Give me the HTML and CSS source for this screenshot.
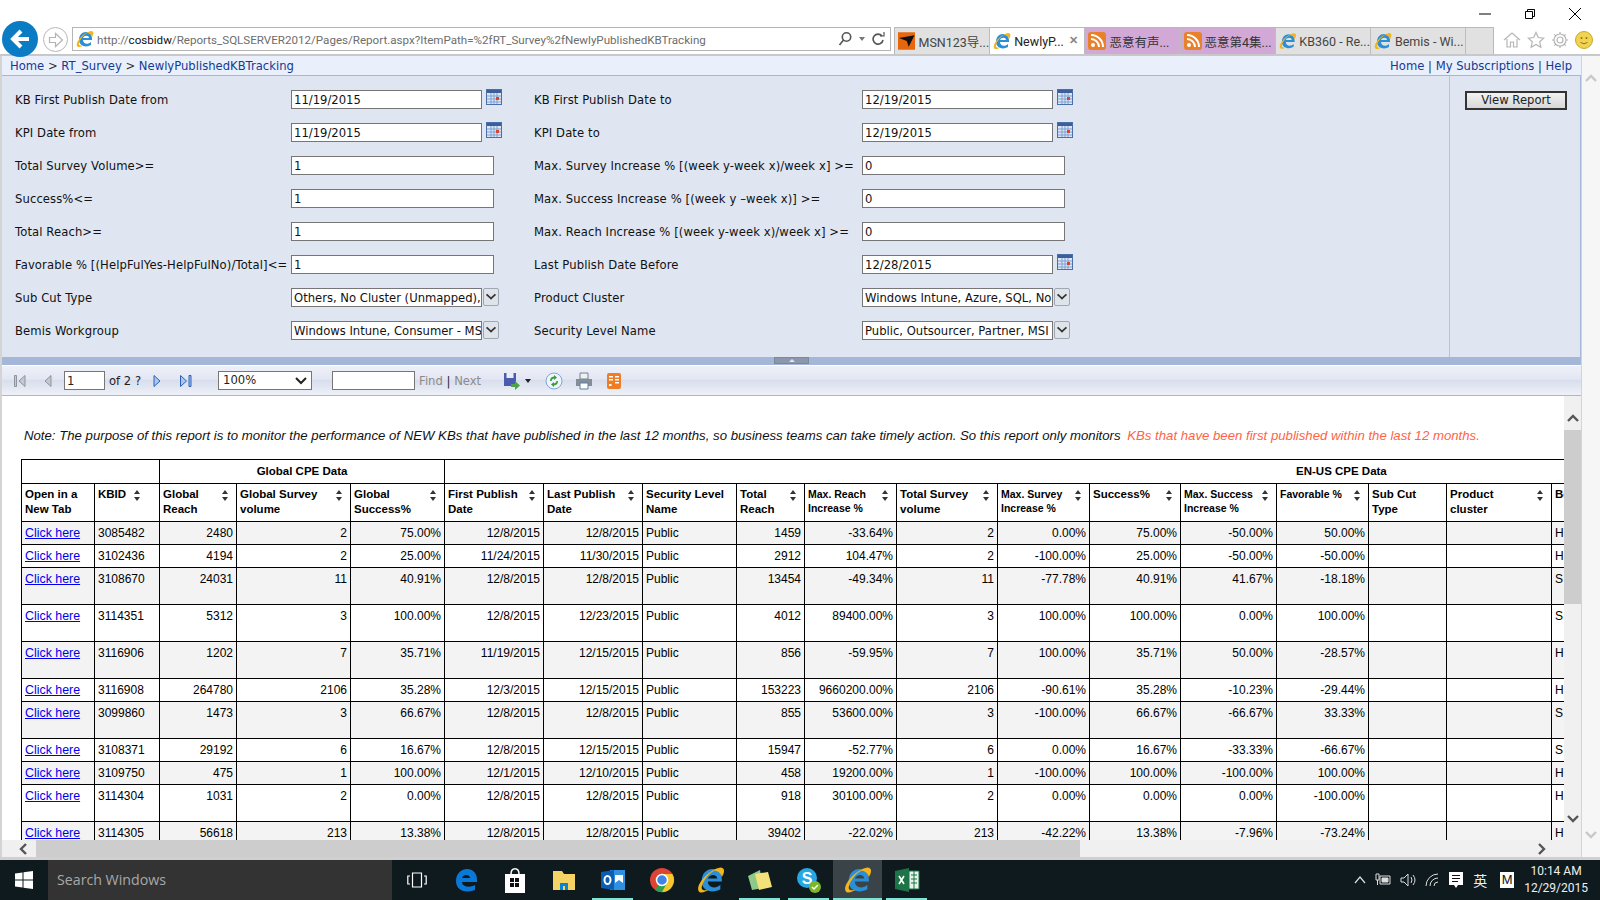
FILE: index.html
```html
<!DOCTYPE html>
<html lang="en">
<head>
    <meta charset="UTF-8">
    <title>NewlyPublishedKBTracking</title>
    <link rel="stylesheet" href="styles.css">
</head>
<body>
    <div class="window">
        <div class="title-bar">
            <span class="win-btn"><svg width="14" height="14" viewBox="0 0 14 14"><path d="M1 7h12" stroke="#000" stroke-width="1"/></svg></span>
            <span class="win-btn"><svg width="14" height="14" viewBox="0 0 14 14" fill="none" stroke="#000"><path d="M2.5 4.5h7v7h-7zM4.5 4.5v-2h7v7h-2"/></svg></span>
            <span class="win-btn"><svg width="14" height="14" viewBox="0 0 14 14"><path d="M1 1l12 12M13 1L1 13" stroke="#000"/></svg></span>
        </div>

        <div class="nav-bar">
            <span class="back-btn"><svg width="24" height="24" viewBox="0 0 24 24" fill="none" stroke="#fff" stroke-width="4"><path d="M21 12H6M13 4l-8 8 8 8"/></svg></span>
            <span class="forward-btn"><svg width="16" height="16" viewBox="0 0 16 16" fill="none" stroke="#b4b4b4" stroke-width="1.2"><path d="M1.5 5.5h6v-4l7 6.5-7 6.5v-4h-6z"/></svg></span>
            <div class="address-bar">
                <svg class="ie-icon" width="18" height="18" viewBox="0 0 18 18"><use href="#ie"/></svg>
                <span class="url">http://<b>cosbidw</b>/Reports_SQLSERVER2012/Pages/Report.aspx?ItemPath=%2fRT_Survey%2fNewlyPublishedKBTracking</span>
                <svg width="16" height="16" viewBox="0 0 16 16" fill="none" stroke="#555" stroke-width="1.6"><circle cx="9.5" cy="6" r="4.2"/><path d="M6.5 9l-4 5"/></svg>
                <span class="caret"></span>
                <svg width="14" height="16" viewBox="0 0 14 16" fill="none" stroke="#555" stroke-width="1.6"><path d="M11 5a5 5 0 1 0 1 4"/><path d="M9 5h4V1" stroke-width="1.2"/></svg>
            </div>
            <div class="tabs">
                <div class="tab"><svg width="18" height="18" viewBox="0 0 18 18"><rect width="18" height="18" fill="#e8660c"/><path d="M1 6l16-3-6 12-2-6z" fill="#111"/></svg><span>MSN123导...</span></div>
                <div class="tab active"><svg width="18" height="18" viewBox="0 0 18 18"><use href="#ie"/></svg><span>NewlyP...</span><i class="tab-x">✕</i></div>
                <div class="tab pink"><svg width="18" height="18" viewBox="0 0 18 18"><use href="#rss"/></svg><span>恶意有声...</span></div>
                <div class="tab pink"><svg width="18" height="18" viewBox="0 0 18 18"><use href="#rss"/></svg><span>恶意第4集...</span></div>
                <div class="tab"><svg width="18" height="18" viewBox="0 0 18 18"><use href="#ie"/></svg><span>KB360 - Re...</span></div>
                <div class="tab"><svg width="18" height="18" viewBox="0 0 18 18"><use href="#ie"/></svg><span>Bemis - Wi...</span></div>
                <div class="tab new-tab"></div>
            </div>
            <div class="tools">
                <svg width="18" height="18" viewBox="0 0 18 18" fill="none" stroke="#b5b5b5" stroke-width="1.2"><path d="M1 9l8-7 8 7M4 8v8h3.5v-5h3v5H14V8"/></svg>
                <svg width="18" height="18" viewBox="0 0 18 18" fill="none" stroke="#b5b5b5" stroke-width="1.2"><path d="M9 1.5l2.3 5 5.5.6-4.1 3.7 1.2 5.5L9 13.5l-4.9 2.8 1.2-5.5L1.2 7.1l5.5-.6z"/></svg>
                <svg width="18" height="18" viewBox="0 0 18 18" fill="none" stroke="#b5b5b5" stroke-width="1.2"><circle cx="9" cy="9" r="3"/><circle cx="9" cy="9" r="6"/><path d="M9 1v2M9 15v2M1 9h2M15 9h2M3.3 3.3l1.5 1.5M13.2 13.2l1.5 1.5M14.7 3.3l-1.5 1.5M4.8 13.2l-1.5 1.5"/></svg>
                <svg width="18" height="18" viewBox="0 0 18 18"><circle cx="9" cy="9" r="8.5" fill="#f2d34f" stroke="#c9a92c"/><circle cx="6.5" cy="7" r="1" fill="#8a7420"/><circle cx="11.5" cy="7" r="1" fill="#8a7420"/><path d="M5.5 11.5q3.5 2.5 7 0" fill="none" stroke="#8a7420"/></svg>
            </div>
        </div>

        <div class="page">
            <div class="page-main">
                <div class="breadcrumb">
                    <div class="crumbs"><a>Home</a> &gt; <a>RT_Survey</a> &gt; <a>NewlyPublishedKBTracking</a></div>
                    <div class="crumbs"><a>Home</a> | <a>My Subscriptions</a> | <a>Help</a></div>
                </div>

                <div class="params">
                    <div class="param-grid">
                        <label>KB First Publish Date from</label>
                        <div class="field"><span class="input date">11/19/2015</span><svg class="cal" width="16" height="16"><use href="#cal"/></svg></div>
                        <label>KB First Publish Date to</label>
                        <div class="field"><span class="input date">12/19/2015</span><svg class="cal" width="16" height="16"><use href="#cal"/></svg></div>

                        <label>KPI Date from</label>
                        <div class="field"><span class="input date">11/19/2015</span><svg class="cal" width="16" height="16"><use href="#cal"/></svg></div>
                        <label>KPI Date to</label>
                        <div class="field"><span class="input date">12/19/2015</span><svg class="cal" width="16" height="16"><use href="#cal"/></svg></div>

                        <label>Total Survey Volume&gt;=</label>
                        <div class="field"><span class="input">1</span></div>
                        <label>Max. Survey Increase % [(week y-week x)/week x] &gt;=</label>
                        <div class="field"><span class="input">0</span></div>

                        <label>Success%&lt;=</label>
                        <div class="field"><span class="input">1</span></div>
                        <label>Max. Success Increase % [(week y –week x)] &gt;=</label>
                        <div class="field"><span class="input">0</span></div>

                        <label>Total Reach&gt;=</label>
                        <div class="field"><span class="input">1</span></div>
                        <label>Max. Reach Increase % [(week y-week x)/week x] &gt;=</label>
                        <div class="field"><span class="input">0</span></div>

                        <label>Favorable % [(HelpFulYes-HelpFulNo)/Total]&lt;=</label>
                        <div class="field"><span class="input">1</span></div>
                        <label>Last Publish Date Before</label>
                        <div class="field"><span class="input date">12/28/2015</span><svg class="cal" width="16" height="16"><use href="#cal"/></svg></div>

                        <label>Sub Cut Type</label>
                        <div class="field"><span class="input date clip">Others, No Cluster (Unmapped),</span><span class="drop"></span></div>
                        <label>Product Cluster</label>
                        <div class="field"><span class="input date clip">Windows Intune, Azure, SQL, No</span><span class="drop"></span></div>

                        <label>Bemis Workgroup</label>
                        <div class="field"><span class="input date clip">Windows Intune, Consumer - MS</span><span class="drop"></span></div>
                        <label>Security Level Name</label>
                        <div class="field"><span class="input date clip">Public, Outsourcer, Partner, MSI</span><span class="drop"></span></div>
                    </div>
                    <div class="view-col"><button class="view-btn">View Report</button></div>
                </div>

                <div class="splitter"><span class="split-handle"></span></div>

                <div class="toolbar">
                    <svg class="tb-nav" width="14" height="14" viewBox="0 0 14 14" fill="#c4c8d0" stroke="#8f949c"><path d="M1.5 1.5h2v11h-2zM12 1.5v11L6 7z"/></svg>
                    <svg class="tb-nav second" width="10" height="14" viewBox="0 0 10 14" fill="#c4c8d0" stroke="#8f949c"><path d="M8 1.5v11L2 7z"/></svg>
                    <span class="tb-input page-num">1</span>
                    <span class="of-text">of 2 ?</span>
                    <svg class="tb-nav next" width="10" height="14" viewBox="0 0 10 14" fill="#a9c6ee" stroke="#2a62b8"><path d="M2 1.5v11L8 7z"/></svg>
                    <svg class="tb-nav last" width="14" height="14" viewBox="0 0 14 14" fill="#a9c6ee" stroke="#2a62b8"><path d="M1.5 1.5v11L7.5 7zM10 1.5h2v11h-2z"/></svg>
                    <span class="tb-input zoom-select">100%<svg width="12" height="8" viewBox="0 0 12 8" fill="none" stroke="#222" stroke-width="2"><path d="M1 1l5 5 5-5"/></svg></span>
                    <span class="tb-input find-box"></span>
                    <span class="find-links"><em>Find</em> | <em>Next</em></span>
                    <svg class="tb-save" width="18" height="18" viewBox="0 0 18 18"><path d="M1 1h12v13H1z" fill="#4a5cb0"/><path d="M3.5 1h7v5h-7z" fill="#e8ecf6"/><path d="M8 12h4V9l5 4.5-5 4.5v-3H8z" fill="#4fa24a"/></svg>
                    <span class="caret dark"></span>
                    <svg class="tb-refresh" width="18" height="18" viewBox="0 0 18 18"><circle cx="9" cy="9" r="8" fill="#eef4fb" stroke="#7ea6d8"/><path d="M9 3l3 2.5-3 2.5V6.5A3 3 0 0 0 6.5 9H5a4.5 4.5 0 0 1 4-4.5zM9 15l-3-2.5L9 10v1.5A3 3 0 0 0 11.5 9H13a4.5 4.5 0 0 1-4 4.5z" fill="#3f9a3c"/></svg>
                    <svg class="tb-print" width="18" height="18" viewBox="0 0 18 18"><path d="M5 1h8v6H5z" fill="#eef0f3" stroke="#77808c"/><path d="M1 7h16v7H1z" fill="#858d99"/><path d="M5 11h8v6H5z" fill="#fff" stroke="#5f7fa8"/></svg>
                    <svg class="tb-feed" width="14" height="16" viewBox="0 0 14 16"><rect width="14" height="16" rx="2" fill="#ee7d25"/><path d="M2 3h4v1.5H2zM8 3h4v1.5H8zM8 6h4v1.5H8zM8 9h4v1.5H8zM2 6h4v1.5H2zM2 11h2.5v2H2z" fill="#fff"/></svg>
                </div>

                <div class="report">
                    <div class="report-body">
                        <p class="note">Note: The purpose of this report is to monitor the performance of NEW KBs that have published in the last 12 months, so business teams can take timely action. So this report only monitors <span class="note-red">KBs that have been first published within the last 12 months.</span></p>
                        <div class="table-clip">
                            <table id="reportTable">
                                <colgroup id="reportCols"></colgroup>
                                <thead>
                                    <tr class="group-row">
                                        <th colspan="2"></th>
                                        <th colspan="3">Global CPE Data</th>
                                        <th colspan="13" class="en-us">EN-US CPE Data</th>
                                    </tr>
                                    <tr class="head-row" id="headRow"></tr>
                                </thead>
                                <tbody id="reportRows"></tbody>
                            </table>
                        </div>
                    </div>
                    <div class="v-scroll inner">
                        <svg width="12" height="8" viewBox="0 0 12 8" fill="none" stroke="#555" stroke-width="2.4"><path d="M1 7l5-5 5 5"/></svg>
                        <span class="v-thumb"></span>
                        <svg class="sb-end" width="12" height="8" viewBox="0 0 12 8" fill="none" stroke="#555" stroke-width="2.4"><path d="M1 1l5 5 5-5"/></svg>
                    </div>
                </div>
                <div class="h-scroll">
                    <span class="h-arrow"><svg width="10" height="12" viewBox="0 0 10 12" fill="none" stroke="#555" stroke-width="2.4"><path d="M8 1L3 6l5 5"/></svg></span>
                    <span class="h-thumb"></span>
                    <span class="h-arrow right"><svg width="10" height="12" viewBox="0 0 10 12" fill="none" stroke="#555" stroke-width="2.4"><path d="M2 1l5 5-5 5"/></svg></span>
                </div>
            </div>
            <div class="v-scroll outer">
                <svg width="12" height="8" viewBox="0 0 12 8" fill="none" stroke="#c8c8c8" stroke-width="2.4"><path d="M1 7l5-5 5 5"/></svg>
                <svg class="sb-end" width="12" height="8" viewBox="0 0 12 8" fill="none" stroke="#c8c8c8" stroke-width="2.4"><path d="M1 1l5 5 5-5"/></svg>
            </div>
        </div>

        <div class="taskbar">
            <span class="start"><svg width="18" height="18" viewBox="0 0 18 18" fill="#fff"><path d="M0 2.5l7.5-1v7H0zM8.5 1.3L18 0v8.5H8.5zM0 9.5h7.5v7l-7.5-1zM8.5 9.5H18V18l-9.5-1.3z"/></svg></span>
            <div class="search">Search Windows</div>
            <span class="task-ico"><svg width="20" height="18" viewBox="0 0 20 18" fill="none" stroke="#fff" stroke-width="1.2"><path d="M5.5 2h9v14h-9zM3 5H.8v8H3M17 5h2.2v8H17"/></svg></span>
            <span class="task-ico"><svg width="24" height="24" viewBox="0 0 24 24"><path d="M2 13C2 5 8 1 13 1c6 0 10 4 10 11v2H8c0 5 8 6 13 3v5c-7 3-19 2-19-9zm6-3h8c0-4-7-4-8 0z" fill="#0a78d7"/></svg></span>
            <span class="task-ico"><svg width="24" height="26" viewBox="0 0 24 26"><path d="M2 7h20v19H2z" fill="#fff"/><path d="M8 7c0-7 8-7 8 0" fill="none" stroke="#fff" stroke-width="1.5"/><path d="M7 11h4v4H7zM12 11h4v4h-4zM7 16h4v4H7zM12 16h4v4h-4z" fill="#111"/></svg></span>
            <span class="task-ico"><svg width="24" height="24" viewBox="0 0 24 24"><path d="M1 3h9l2 3h11v16H1z" fill="#f6d365"/><path d="M8 15h8v7H8z" fill="#0a82d6"/><path d="M11 18h2v4h-2z" fill="#f6d365"/></svg></span>
            <span class="task-ico running"><svg width="26" height="24" viewBox="0 0 26 24"><path d="M10 2h15v20H10z" fill="#2f8fe0"/><path d="M1 4l13-2v20L1 20z" fill="#0b5db4"/><path d="M15 7h8v8l-4-3-4 3z" fill="#fff"/><ellipse cx="7.5" cy="12" rx="3" ry="4" fill="none" stroke="#fff" stroke-width="2"/></svg></span>
            <span class="task-ico"><svg width="26" height="26" viewBox="0 0 26 26"><circle cx="13" cy="13" r="12" fill="#de4433"/><path d="M13 13L23.4 19A12 12 0 0 1 6 23z" fill="#2e9e4f"/><path d="M13 7h10.4A12 12 0 0 1 13 25l5-9z" fill="#f7c62d"/><circle cx="13" cy="13" r="5.5" fill="#3f83e6" stroke="#fff" stroke-width="1.5"/></svg></span>
            <span class="task-ico"><svg width="28" height="28" viewBox="0 0 18 18"><use href="#ie"/></svg></span>
            <span class="task-ico running"><svg width="26" height="24" viewBox="0 0 26 24"><path d="M1 8l12-6 3 18-11 2z" fill="#8fc98a"/><path d="M8 6l13-2 4 15-13 3z" fill="#f2e27a"/></svg></span>
            <span class="task-ico running"><svg width="26" height="28" viewBox="0 0 26 28"><circle cx="11" cy="12" r="10" fill="#27a8e4"/><text x="11" y="18" text-anchor="middle" class="skype-s">S</text><circle cx="19" cy="21" r="6" fill="#7ab829"/><path d="M16 21l2 2 4-4" fill="none" stroke="#fff" stroke-width="1.5"/></svg></span>
            <span class="task-ico current running"><svg width="28" height="28" viewBox="0 0 18 18"><use href="#ie"/></svg></span>
            <span class="task-ico running"><svg width="26" height="24" viewBox="0 0 26 24"><path d="M1 3l14-3v24L1 21z" fill="#1d7446"/><path d="M15 3h10v18H15z" fill="#e6f2ea" stroke="#1d7446"/><path d="M17 7h6M17 11h6M17 15h6M20 3v18" stroke="#1d7446"/><path d="M5 8l5 8M10 8l-5 8" stroke="#fff" stroke-width="1.6"/></svg></span>
            <div class="tray">
                <svg width="12" height="8" viewBox="0 0 12 8" fill="none" stroke="#ddd" stroke-width="1.2"><path d="M1 7l5-6 5 6"/></svg>
                <svg width="16" height="14" viewBox="0 0 16 14" fill="none" stroke="#ddd"><path d="M5 3h10v8H5z"/><path d="M1 1h3v6H1zM2.5 7v5"/><path d="M7 5h6v4H7z" fill="#ddd"/></svg>
                <svg width="16" height="14" viewBox="0 0 16 14" fill="none" stroke="#ddd"><path d="M1 5h3l4-4v12l-4-4H1zM11 4q2 3 0 6M13 2q4 5 0 10"/></svg>
                <svg width="16" height="14" viewBox="0 0 16 14" fill="none" stroke="#ddd"><path d="M1 13A12 12 0 0 1 13 1M5 13a8 8 0 0 1 8-8M9 13a4 4 0 0 1 4-4"/></svg>
                <svg class="tray-msg" width="16" height="18" viewBox="0 0 16 18"><path d="M1 1h14v13H10l-2 3-2-3H1z" fill="#fff"/><path d="M4 4.5h8M4 7.5h8M4 10.5h6" stroke="#111"/></svg>
                <span class="lang">英</span>
                <span class="m-key">M</span>
                <div class="clock"><span>10:14 AM</span><span>12/29/2015</span></div>
            </div>
        </div>
    </div>

    <svg class="defs" width="0" height="0">
        <defs>
            <g id="ie">
                <path d="M3 10c0-5 3-8 7-8 4 0 6 3 6 7v1H7c0 4 5 5 8 2v3c-5 3-12 1-12-5zm4-2h6c0-3-5-3-6 0z" fill="#2a8fd8"/>
                <path d="M1 16C-1 12 8 2 15 1c3 0 3 3 1 6-1-3-3-4-5-4C7 5 3 11 3 14c0 2 3 2 5 1-3 2-6 3-7 1z" fill="#f3b51d"/>
            </g>
            <g id="rss">
                <rect width="18" height="18" rx="3" fill="#e8822a"/>
                <circle cx="5" cy="13" r="2" fill="#fff"/>
                <path d="M3 7a8 8 0 0 1 8 8M3 3a12 12 0 0 1 12 12" fill="none" stroke="#fff" stroke-width="2"/>
            </g>
            <g id="cal">
                <rect x="0.5" y="0.5" width="15" height="15" fill="#dce8f7" stroke="#4b6fa8"/>
                <rect x="1" y="1" width="14" height="3" fill="#3c5f9c"/>
                <path d="M1 7h14M1 10h14M1 13h14M5 4v11M8 4v11M11 4v11" stroke="#7f9fd0"/>
                <rect x="10" y="8" width="3" height="3" fill="#d9442f"/>
            </g>
        </defs>
    </svg>

    <script src="report.js"></script>
</body>
</html>
```

FILE: styles.css
```css
* {
    box-sizing: border-box;
}

html, body {
    margin: 0;
    height: 100%;
    overflow: hidden;
}

body {
    font-family: "Liberation Sans", Arial, sans-serif;
    background-color: #fff;
}

.defs {
    position: absolute;
}

.window {
    display: flex;
    flex-direction: column;
    height: 900px;
}

.title-bar {
    height: 27px;
    display: flex;
    justify-content: flex-end;
    align-items: flex-start;
    gap: 31px;
    padding: 7px 18px 0 0;
}

.win-btn {
    width: 14px;
    height: 14px;
    display: flex;
}

.nav-bar {
    height: 29px;
    display: flex;
    align-items: flex-start;
    position: relative;
    padding-left: 72px;
    border-bottom: 2px solid #c8c8c8;
}

.back-btn {
    position: absolute;
    left: 2px;
    top: -6px;
    width: 36px;
    height: 36px;
    border-radius: 50%;
    background-color: #0a7cc4;
    display: flex;
    align-items: center;
    justify-content: center;
}

.forward-btn {
    position: absolute;
    left: 43px;
    top: 0;
    width: 25px;
    height: 25px;
    border-radius: 50%;
    border: 1px solid #b8b8b8;
    display: flex;
    align-items: center;
    justify-content: center;
}

.address-bar {
    width: 819px;
    height: 24px;
    border: 1px solid #b5b5b5;
    display: flex;
    align-items: center;
    gap: 6px;
    padding: 0 5px 0 3px;
}

.ie-icon {
    margin-right: -3px;
}

.url {
    flex: 1;
    padding-top: 1px;
    font-family: Roboto, sans-serif;
    font-size: 11.6px;
    color: #6d6d6d;
    white-space: nowrap;
    overflow: hidden;
}

.url b {
    font-weight: 400;
    color: #111;
}

.caret {
    width: 0;
    height: 0;
    border-left: 3.5px solid transparent;
    border-right: 3.5px solid transparent;
    border-top: 4px solid #777;
}

.caret.dark {
    border-top-color: #222;
    margin-left: 4px;
}

.tabs {
    display: flex;
    margin-left: 3px;
    height: 27px;
    border: 1px solid #b9b9b9;
    border-bottom: none;
}

.tab {
    width: 95.2px;
    display: flex;
    align-items: center;
    gap: 3px;
    padding-left: 3px;
    background-color: #e1e1e1;
    border-right: 1px solid #bdbdbd;
    font-family: Roboto, "Noto Sans CJK SC", sans-serif;
    font-size: 12.5px;
    color: #444;
    white-space: nowrap;
    position: relative;
}

.tab.active {
    background-color: #fff;
    color: #222;
}

.tab.pink {
    background-color: #d2a8d6;
    color: #333;
}

.tab.new-tab {
    width: 27px;
    padding: 0;
    border-right: none;
}

.tab-x {
    position: absolute;
    right: 6px;
    top: 6px;
    font-style: normal;
    font-size: 11px;
    font-weight: 700;
    color: #888;
}

.tools {
    display: flex;
    gap: 6px;
    padding: 4px 0 0 9px;
}

.page {
    flex: 1;
    display: flex;
    min-height: 0;
    padding-left: 2px;
    border-bottom: 3px solid #d0d0d0;
    background-color: #d4d4d4;
}

.page-main {
    flex: 1;
    min-width: 0;
    display: flex;
    flex-direction: column;
    background-color: #fff;
}

.breadcrumb {
    height: 20px;
    background-color: #e9f0fb;
    display: flex;
    justify-content: space-between;
    align-items: center;
    padding: 0 9px 0 8px;
    border-bottom: 1px solid #a5b7d8;
}

.crumbs {
    font-family: "DejaVu Sans", Verdana, sans-serif;
    font-size: 11.6px;
    color: #333;
}

.crumbs a {
    color: #153a94;
}

.params {
    height: 281px;
    display: flex;
    background-color: #dfe6f2;
    border-right: 1px solid #a5b7d8;
}

.param-grid {
    width: 1448px;
    border-right: 1px solid #b6c3db;
    display: grid;
    grid-template-columns: 276px 243px 328px 1fr;
    grid-auto-rows: 33px;
    padding: 14px 0 0 13px;
}

.param-grid label {
    font-family: "DejaVu Sans", Verdana, sans-serif;
    font-size: 11.6px;
    letter-spacing: 0.1px;
    color: #111;
    white-space: nowrap;
    line-height: 21px;
    height: 21px;
}

.field {
    display: flex;
    align-items: flex-start;
}

.input {
    width: 203px;
    height: 19px;
    background-color: #fff;
    border: 1px solid #767676;
    font-family: "DejaVu Sans", Verdana, sans-serif;
    font-size: 11.6px;
    line-height: 19px;
    padding-left: 2px;
    white-space: nowrap;
    overflow: hidden;
    color: #111;
}

.input.date {
    width: 191px;
}

.cal {
    margin: -1px 0 0 4px;
}

.drop {
    width: 16px;
    height: 18px;
    margin-left: 1px;
    background-color: #dfe3ea;
    border: 1px solid #a0a6b2;
    border-radius: 2px;
    position: relative;
}

.drop::after {
    content: "";
    position: absolute;
    left: 3px;
    top: 2px;
    width: 6px;
    height: 6px;
    border-right: 2px solid #333;
    border-bottom: 2px solid #333;
    transform: scale(0.9, 0.8) rotate(45deg);
}

.view-col {
    flex: 1;
    padding: 14px 0 0 15px;
}

.view-btn {
    width: 102px;
    height: 19px;
    padding: 0;
    background: linear-gradient(#f2f2f2, #d8d8d8);
    border: 2px solid #333;
    font-family: "DejaVu Sans", Verdana, sans-serif;
    font-size: 11.6px;
    color: #222;
}

.splitter {
    height: 8px;
    background-color: #a5b7d8;
    display: flex;
    justify-content: center;
}

.split-handle {
    width: 35px;
    height: 7px;
    background-color: #8c97ad;
    border: 1px solid #7d889e;
    display: flex;
    justify-content: center;
    align-items: center;
}

.split-handle::after {
    content: "";
    border-left: 3px solid transparent;
    border-right: 3px solid transparent;
    border-bottom: 3px solid #dfe6f2;
}

.toolbar {
    height: 31px;
    display: flex;
    align-items: center;
    padding-left: 11px;
    background: linear-gradient(#eef0f8 0%, #e3e7f3 45%, #d9deed 50%, #eef1f8 100%);
    border-top: 1px solid #fff;
    border-bottom: 1px solid #a5b7d8;
    font-family: "DejaVu Sans", Verdana, sans-serif;
    font-size: 11.6px;
    color: #222;
}

.tb-nav.second {
    margin-left: 16px;
}

.tb-nav.next {
    margin-left: 11px;
}

.tb-nav.last {
    margin-left: 17px;
}

.tb-input {
    height: 19px;
    background-color: #fff;
    border: 1px solid #767676;
    line-height: 19px;
    padding-left: 2px;
}

.page-num {
    width: 41px;
    margin-left: 11px;
}

.of-text {
    margin-left: 4px;
}

.zoom-select {
    width: 94px;
    margin-left: 25px;
    padding-left: 4px;
    display: flex;
    align-items: center;
    justify-content: space-between;
    padding-right: 4px;
}

.find-box {
    width: 83px;
    margin-left: 20px;
}

.find-links {
    margin-left: 4px;
}

.find-links em {
    font-style: normal;
    color: #8b8b8b;
}

.tb-save {
    margin-left: 22px;
}

.tb-refresh {
    margin-left: 14px;
}

.tb-print {
    margin-left: 12px;
}

.tb-feed {
    margin-left: 14px;
}

.report {
    flex: 1;
    min-height: 0;
    display: flex;
}

.report-body {
    flex: 1;
    min-width: 0;
    display: flex;
    flex-direction: column;
}

.note {
    margin: 0;
    padding: 32px 0 0 22px;
    height: 63px;
    font-size: 13.2px;
    font-style: italic;
    color: #111;
    white-space: nowrap;
}

.note-red {
    color: #ff6347;
    margin-left: 3px;
}

.table-clip {
    flex: 1;
    min-height: 0;
    overflow: hidden;
    padding-left: 19px;
}

table {
    table-layout: fixed;
    border-collapse: collapse;
    width: 1589px;
    font-size: 12px;
    color: #000;
}

th, td {
    border: 1px solid #000;
    padding: 4px 3px 2px;
    overflow: hidden;
    vertical-align: top;
    text-align: left;
    line-height: 15px;
}

td {
    height: 23px;
    white-space: nowrap;
}

td.num {
    text-align: right;
}

tr.tall td {
    height: 37px;
}

tbody tr:nth-child(odd) td {
    background-color: #f3f3f3;
}

td a {
    color: #0000ee;
    font-size: 12.4px;
    text-decoration: underline;
}

.group-row th {
    height: 24px;
    padding: 2px 3px;
    text-align: center;
    font-size: 11.5px;
    vertical-align: middle;
}

.group-row .en-us {
    text-align: left;
    padding-left: 851px;
}

.head-row th {
    height: 38px;
    position: relative;
    padding: 3px 3px 0;
    font-size: 11.5px;
    white-space: nowrap;
}

.head-row th.small {
    font-size: 10.5px;
    line-height: 14px;
}

.sort {
    position: absolute;
    right: 7px;
    top: 6px;
    width: 7px;
    height: 11px;
}

.sort.near {
    right: 18px;
}

.sort::before, .sort::after {
    content: "";
    position: absolute;
    left: 0;
    border-left: 3.5px solid transparent;
    border-right: 3.5px solid transparent;
}

.sort::before {
    top: 0;
    border-bottom: 4px solid #333;
}

.sort::after {
    bottom: 0;
    border-top: 4px solid #333;
}

.v-scroll {
    width: 17px;
    flex-shrink: 0;
    display: flex;
    flex-direction: column;
    align-items: center;
    background-color: #f0f0f0;
}

.v-scroll.inner {
    padding: 18px 0 17px;
}

.v-thumb {
    width: 100%;
    height: 174px;
    margin-top: 8px;
    background-color: #cdcdcd;
}

.sb-end {
    margin-top: auto;
}

.v-scroll.outer {
    width: 18px;
    margin-left: 1px;
    padding: 18px 0;
    background-color: #f6f6f6;
}

.h-scroll {
    height: 17px;
    flex-shrink: 0;
    display: flex;
    align-items: stretch;
    background-color: #f0f0f0;
}

.h-arrow {
    width: 34px;
    padding-left: 8px;
    display: flex;
    align-items: center;
    justify-content: center;
}

.h-arrow.right {
    margin-left: auto;
    width: 44px;
    padding-left: 0;
    justify-content: flex-start;
}

.h-thumb {
    width: 1044px;
    background-color: #cdcdcd;
}

.taskbar {
    height: 40px;
    flex-shrink: 0;
    display: flex;
    align-items: center;
    background-color: #0f1a1e;
}

.start {
    width: 48px;
    height: 40px;
    display: flex;
    align-items: center;
    justify-content: center;
}

.search {
    width: 344px;
    height: 40px;
    background-color: #333;
    color: #a8a8a8;
    font-family: "Open Sans", sans-serif;
    font-size: 14.2px;
    line-height: 40px;
    padding-left: 9px;
}

.task-ico {
    width: 49px;
    height: 40px;
    display: flex;
    align-items: center;
    justify-content: center;
    flex-shrink: 0;
    position: relative;
}

.task-ico.current {
    background-color: #3a4347;
}

.task-ico.running::after {
    content: "";
    position: absolute;
    left: 4px;
    right: 4px;
    bottom: 0;
    height: 2px;
    background-color: #7fe3d6;
}

.task-ico.current.running::after {
    left: 0;
    right: 0;
}

.skype-s {
    font-family: "Liberation Sans", sans-serif;
    font-weight: 700;
    font-size: 16px;
    fill: #fff;
}

.tray {
    margin-left: auto;
    display: flex;
    align-items: center;
    gap: 9px;
    padding-right: 12px;
    color: #eee;
}

.tray-msg {
    margin-left: -2px;
}

.lang {
    font-family: "Noto Sans CJK SC", sans-serif;
    font-size: 14px;
}

.m-key {
    width: 14px;
    height: 16px;
    margin-left: 4px;
    background-color: #fff;
    color: #111;
    font-size: 13px;
    line-height: 16px;
    text-align: center;
}

.clock {
    display: flex;
    flex-direction: column;
    align-items: center;
    font-family: Roboto, sans-serif;
    font-size: 12px;
    line-height: 17px;
    margin-left: 1px;
}
```

FILE: report.js
```js
// column widths, then header cells and rows of the report table
const widths = [73, 65, 77, 114, 94, 99, 99, 94, 68, 92, 101, 92, 91, 96, 92, 78, 105, 60];

const headers = [
    ["Open in a<br>New Tab", "", false],
    ["KBID", "near", false],
    ["Global<br>Reach", "far", false],
    ["Global Survey<br>volume", "far", false],
    ["Global<br>Success%", "far", false],
    ["First Publish<br>Date", "far", false],
    ["Last Publish<br>Date", "far", false],
    ["Security Level<br>Name", "", false],
    ["Total<br>Reach", "far", false],
    ["Max. Reach<br>Increase %", "far", true],
    ["Total Survey<br>volume", "far", false],
    ["Max. Survey<br>Increase %", "far", true],
    ["Success%", "far", false],
    ["Max. Success<br>Increase %", "far", true],
    ["Favorable %", "far", true],
    ["Sub Cut<br>Type", "", false],
    ["Product<br>cluster", "far", false],
    ["Bemis", "", false]
];

// kbid, reach, survey, success, first, last, total reach, max reach, total survey,
// max survey, success, max success, favorable, workgroup letter, tall row
const rows = [
    ["3085482", "2480", "2", "75.00%", "12/8/2015", "12/8/2015", "1459", "-33.64%", "2", "0.00%", "75.00%", "-50.00%", "50.00%", "H", false],
    ["3102436", "4194", "2", "25.00%", "11/24/2015", "11/30/2015", "2912", "104.47%", "2", "-100.00%", "25.00%", "-50.00%", "-50.00%", "H", false],
    ["3108670", "24031", "11", "40.91%", "12/8/2015", "12/8/2015", "13454", "-49.34%", "11", "-77.78%", "40.91%", "41.67%", "-18.18%", "S", true],
    ["3114351", "5312", "3", "100.00%", "12/8/2015", "12/23/2015", "4012", "89400.00%", "3", "100.00%", "100.00%", "0.00%", "100.00%", "S", true],
    ["3116906", "1202", "7", "35.71%", "11/19/2015", "12/15/2015", "856", "-59.95%", "7", "100.00%", "35.71%", "50.00%", "-28.57%", "H", true],
    ["3116908", "264780", "2106", "35.28%", "12/3/2015", "12/15/2015", "153223", "9660200.00%", "2106", "-90.61%", "35.28%", "-10.23%", "-29.44%", "H", false],
    ["3099860", "1473", "3", "66.67%", "12/8/2015", "12/8/2015", "855", "53600.00%", "3", "-100.00%", "66.67%", "-66.67%", "33.33%", "S", true],
    ["3108371", "29192", "6", "16.67%", "12/8/2015", "12/15/2015", "15947", "-52.77%", "6", "0.00%", "16.67%", "-33.33%", "-66.67%", "S", false],
    ["3109750", "475", "1", "100.00%", "12/1/2015", "12/10/2015", "458", "19200.00%", "1", "-100.00%", "100.00%", "-100.00%", "100.00%", "H", false],
    ["3114304", "1031", "2", "0.00%", "12/8/2015", "12/8/2015", "918", "30100.00%", "2", "0.00%", "0.00%", "0.00%", "-100.00%", "H", true],
    ["3114305", "56618", "213", "13.38%", "12/8/2015", "12/8/2015", "39402", "-22.02%", "213", "-42.22%", "13.38%", "-7.96%", "-73.24%", "H", true]
];

const reportCols = document.getElementById("reportCols");
widths.forEach((w) => {
    const col = document.createElement("col");
    col.style.width = w + "px";
    reportCols.appendChild(col);
});

const headRow = document.getElementById("headRow");
headers.forEach(([label, sort, small]) => {
    const th = document.createElement("th");
    if (small) th.className = "small";
    th.innerHTML = label;
    if (sort) {
        const icon = document.createElement("span");
        icon.className = sort === "near" ? "sort near" : "sort";
        th.appendChild(icon);
    }
    headRow.appendChild(th);
});

const reportRows = document.getElementById("reportRows");
rows.forEach((r) => {
    const row = document.createElement("tr");
    if (r[14]) row.className = "tall";
    row.innerHTML = `
        <td><a href="#">Click here</a></td>
        <td>${r[0]}</td>
        <td class="num">${r[1]}</td>
        <td class="num">${r[2]}</td>
        <td class="num">${r[3]}</td>
        <td class="num">${r[4]}</td>
        <td class="num">${r[5]}</td>
        <td>Public</td>
        <td class="num">${r[6]}</td>
        <td class="num">${r[7]}</td>
        <td class="num">${r[8]}</td>
        <td class="num">${r[9]}</td>
        <td class="num">${r[10]}</td>
        <td class="num">${r[11]}</td>
        <td class="num">${r[12]}</td>
        <td></td>
        <td></td>
        <td>${r[13]}</td>
    `;
    reportRows.appendChild(row);
});
```
